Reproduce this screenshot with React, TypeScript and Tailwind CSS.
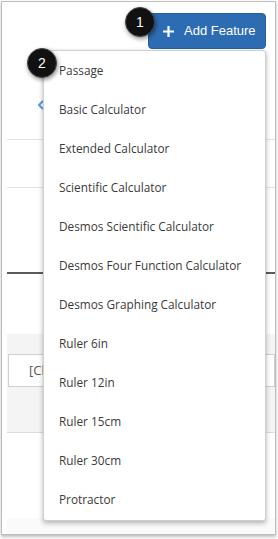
const features = [
  'Passage',
  'Basic Calculator',
  'Extended Calculator',
  'Scientific Calculator',
  'Desmos Scientific Calculator',
  'Desmos Four Function Calculator',
  'Desmos Graphing Calculator',
  'Ruler 6in',
  'Ruler 12in',
  'Ruler 15cm',
  'Ruler 30cm',
  'Protractor',
];

function StepBadge({ n, className }: { n: number; className: string }) {
  return (
    <div
      className={`absolute w-[30px] h-[30px] rounded-full bg-[#111] border border-[#444] text-white flex items-center justify-center text-[14px] font-['Liberation_Sans',Arial,sans-serif] shadow-[1px_2px_4px_rgba(0,0,0,0.45)] ${className}`}
    >
      {n}
    </div>
  );
}

export default function App() {
  return (
    <div className="relative w-[278px] h-[539px] bg-white p-[1px] overflow-hidden">
      {/* screenshot frame */}
      <div className="w-[275px] h-[534px] border border-[#bdbdbd] bg-white shadow-[0_2px_3px_rgba(0,0,0,0.25)] flex flex-col">
        <div className="flex justify-end pt-[11px] pr-[9px]">
          <button className="w-[118px] h-[36px] rounded-[4px] bg-[#2d6cb2] border border-[#24609f] text-white flex items-center gap-[10px] pl-[14px] text-[13px] font-['Liberation_Sans',Arial,sans-serif]">
            <svg width="11" height="11" viewBox="0 0 11 11" fill="none" stroke="currentColor" strokeWidth="2.2">
              <path d="M5.5 0v11M0 5.5h11" />
            </svg>
            Add Feature
          </button>
        </div>

        {/* page behind the menu */}
        <div className="flex flex-col pl-[5px] flex-1">
          <div className="h-[91px] border-b border-[#e2e2e2] pt-[51px] pl-[31px]">
            <svg width="6" height="10" viewBox="0 0 6 10" fill="none" stroke="#5b9fd8" strokeWidth="2">
              <path d="M5 1L1 5l4 4" />
            </svg>
          </div>
          <div className="h-[48px] border-b border-[#e2e2e2]" />
          <div className="h-[86px] border-b-2 border-[#5a5a5a]" />
          <div className="h-[60px]" />
          <div className="h-[99px] bg-[#f4f4f4] border-b border-[#dcdcdc] pt-[20px] pl-[1px]">
            <div className="h-[33px] bg-white border border-[#cfcfcf] flex items-center pl-[20px] text-[13px] text-[#555] font-['Open_Sans',sans-serif]">
              <span className="w-[14px] overflow-hidden whitespace-nowrap">[Ch</span>
            </div>
          </div>
          <div className="flex-1" />
          <div className="h-[16px] bg-[#fafafa]" />
        </div>
      </div>

      {/* dropdown menu */}
      <div className="absolute left-[43px] top-[50px] w-[223px] h-[471px] bg-white border border-[#cfcfcf] rounded-[3px] shadow-[0_2px_5px_rgba(0,0,0,0.3)] flex flex-col">
        {features.map((f) => (
          <div
            key={f}
            className="h-[39px] shrink-0 flex items-center pl-[15px] text-[11.8px] text-[#3a3a3a] font-['Open_Sans',sans-serif]"
          >
            {f}
          </div>
        ))}
      </div>

      <StepBadge n={1} className="left-[125px] top-[7px]" />
      <StepBadge n={2} className="left-[27px] top-[48px]" />
    </div>
  );
}
